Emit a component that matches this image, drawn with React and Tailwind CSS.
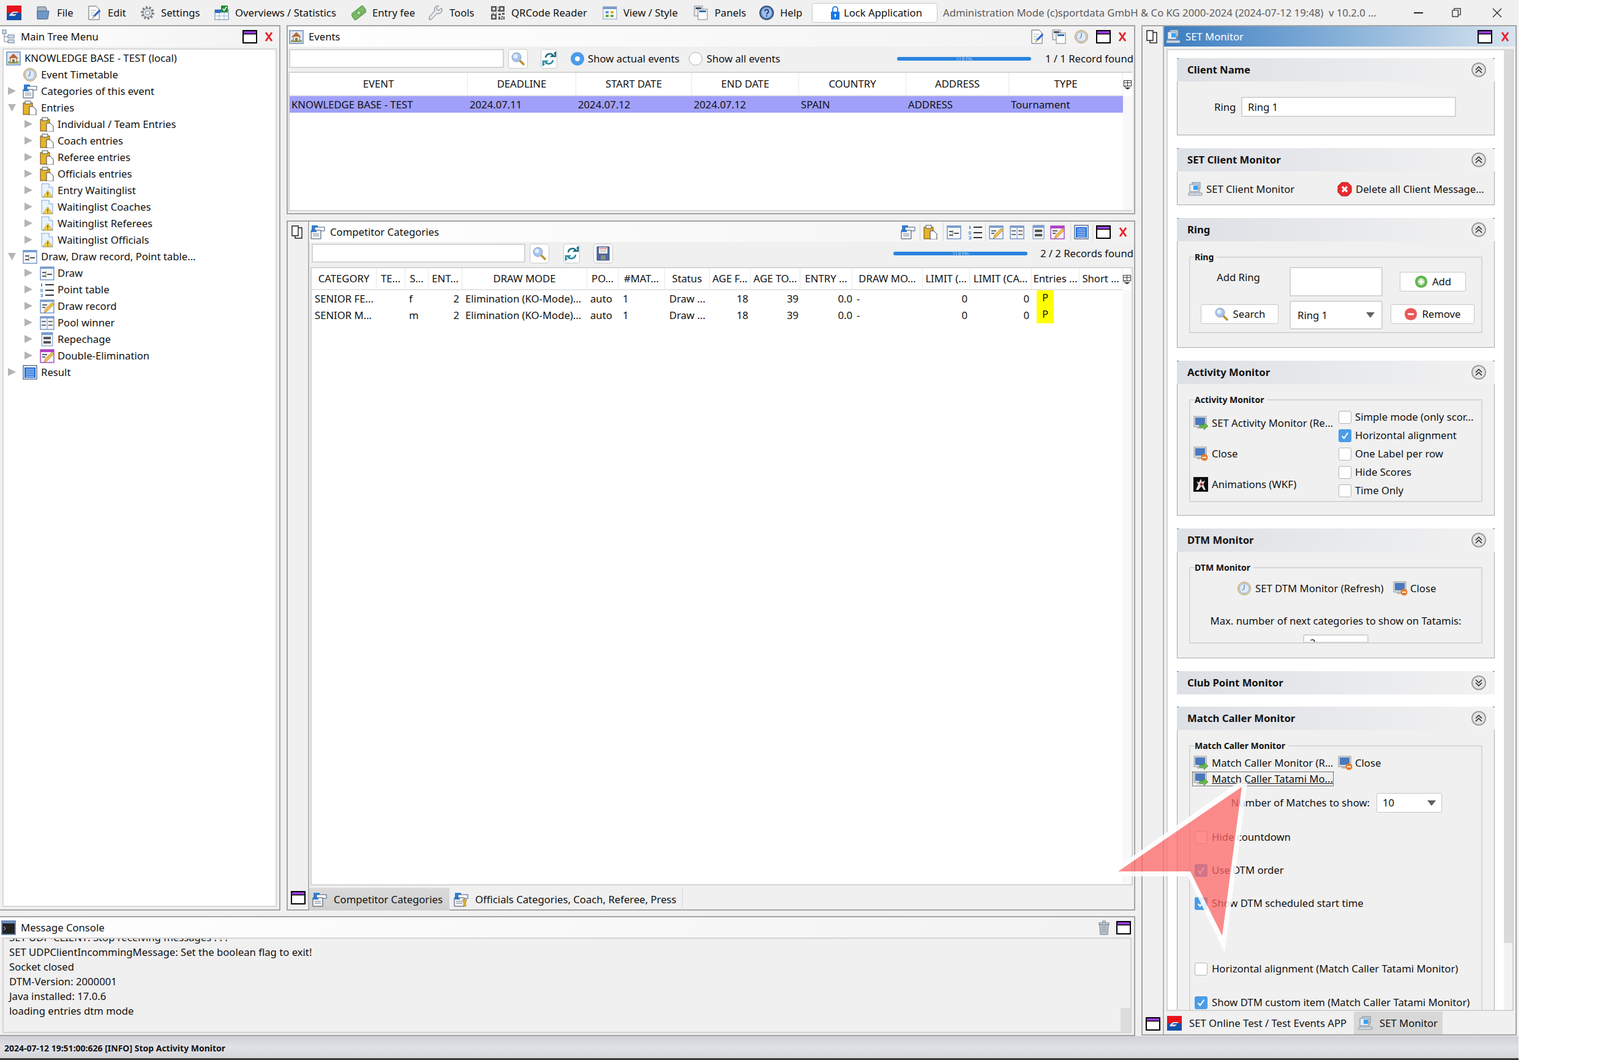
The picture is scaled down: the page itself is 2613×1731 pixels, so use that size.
import React from 'react'

const Svg = ({ children, className = 'w-[24px] h-[24px]', vb = '0 0 24 24' }) => (
  <svg viewBox={vb} className={'shrink-0 ' + className}>{children}</svg>
)

// ---- icons, all drawn by hand ----
const Logo = ({ className }) => (
  <Svg className={className}>
    <rect x="0" y="0" width="24" height="12" fill="#e8141c" />
    <rect x="0" y="12" width="24" height="12" fill="#1450a8" />
    <path d="M5 14 L10 10 L19 10 L17 12 L11 12 L9 14 L16 14 L13 17 L4 17 Z" fill="#d8d8e0" />
  </Svg>
)
const FolderIco = () => (
  <Svg>
    <path d="M2 2h13l2 3v17H2z" fill="#a9b6c6" stroke="#5a6a80" />
    <path d="M2 9h19l-2 13H2z" fill="#6f98c8" stroke="#4a6a90" />
  </Svg>
)
const EditIco = () => (
  <Svg>
    <path d="M3 1h12l5 5v17H3z" fill="#fff" stroke="#5a6475" />
    <path d="M6 8h9M6 12h6M6 16h5" stroke="#9aa" />
    <path d="M9 21l2-5 9-9 2 2-9 9z" fill="#3070d8" stroke="#204a90" strokeWidth=".6" />
    <path d="M9 21l2-5 2 2z" fill="#f0c040" />
  </Svg>
)
const GearIco = () => (
  <Svg>
    <circle cx="12" cy="12" r="9" fill="none" stroke="#7a8088" strokeWidth="4" strokeDasharray="3 2.6" />
    <circle cx="12" cy="12" r="7.4" fill="#dfe3e8" stroke="#6a7078" />
    <circle cx="12" cy="12" r="3.4" fill="#fff" stroke="#6a7078" />
  </Svg>
)
const OverviewIco = () => (
  <Svg>
    <rect x="1" y="7" width="22" height="16" fill="#fff" stroke="#5c7fa8" />
    <path d="M1 12h22M1 17h22M8 7v16M16 7v16" stroke="#8fb0d0" />
    <rect x="1" y="7" width="10" height="5" fill="#2a6fc0" />
    <rect x="11" y="0" width="11" height="11" rx="1" fill="#1d8a30" />
    <path d="M13.5 5l2.5 3 4-6" fill="none" stroke="#fff" strokeWidth="1.6" />
  </Svg>
)
const MoneyIco = () => (
  <Svg>
    <g transform="rotate(-38 12 12)">
      <rect x="0" y="6" width="24" height="12" rx="1" fill="#7dbb6a" stroke="#4e8f42" />
      <circle cx="12" cy="12" r="3.6" fill="#a7d897" stroke="#4e8f42" />
      <path d="M3 9h2M19 15h2" stroke="#3e7d34" />
    </g>
  </Svg>
)
const WrenchIco = () => (
  <Svg>
    <path d="M21 4l-4 4-3-1-1-3 4-4a6 6 0 0 0-7 8L1 19v4h3l10-10a6 6 0 0 0 7-9z" fill="#e4e7eb" stroke="#6c7480" />
  </Svg>
)
const QrIco = () => (
  <Svg>
    <path d="M1 1h9v9H1zM3.500 3.500v4h4v-4zM14 1h9v9h-9zM16.500 3.500v4h4v-4zM1 14h9v9H1zM3.500 16.500v4h4v-4z" fill="#555" fillRule="evenodd" />
    <path d="M12 2h1v3h-1zM12 7h2v3h-2zM2 12h4v1H2zM8 12h3v1H8zM13 13h4v3h-4zM19 12h4v3h-4zM13 18h3v5h-3zM18 17h2v3h-2zM21 18h2v5h-2zM17 21h3v2h-3z" fill="#555" />
  </Svg>
)
const ViewIco = () => (
  <Svg>
    <rect x="1" y="2" width="22" height="20" fill="#fff" stroke="#7e9cc6" />
    <rect x="1" y="2" width="22" height="4" fill="#7e9cc6" />
    <rect x="5" y="9" width="5" height="4" fill="#5a9ad8" />
    <rect x="13" y="9" width="5" height="4" fill="#e0b030" />
    <rect x="5" y="15" width="5" height="4" fill="#58a848" />
    <rect x="13" y="15" width="5" height="4" fill="#70a848" />
  </Svg>
)
const PanelsIco = () => (
  <Svg>
    <rect x="1" y="1" width="13" height="16" fill="#eee" stroke="#7a8088" />
    <rect x="3" y="3" width="9" height="3" fill="#3b4f68" />
    <rect x="7" y="6" width="15" height="17" fill="#fff" stroke="#7a8088" />
    <rect x="9" y="8" width="11" height="3" fill="#2f6db0" />
  </Svg>
)
const HelpIco = () => (
  <Svg>
    <circle cx="12" cy="12" r="11" fill="#5d8ac8" stroke="#2c3f60" strokeWidth="1.6" />
    <circle cx="12" cy="12" r="8" fill="#9fc0e8" />
    <path d="M9 9.500a3 3 0 1 1 4.500 2.600c-1 .6-1.500 1.200-1.500 2.400" fill="none" stroke="#1d3f78" strokeWidth="2" />
    <rect x="11" y="16" width="2" height="2" fill="#1d3f78" />
  </Svg>
)
const LockIco = () => (
  <Svg>
    <path d="M8 11V6a4 4 0 0 1 8 0v5" fill="none" stroke="#2b7fe0" strokeWidth="2" />
    <rect x="5" y="10" width="14" height="13" rx="1" fill="#1878e8" />
    <circle cx="12" cy="15.500" r="1.500" fill="#fff" />
    <rect x="11.300" y="15.500" width="1.400" height="4" fill="#fff" />
  </Svg>
)
const TreeIco = () => (
  <Svg>
    <path d="M5 5v15h6M5 12h6" fill="none" stroke="#6a7a8a" />
    <rect x="2" y="1" width="6" height="6" fill="#cfe0f0" stroke="#6a7a8a" />
    <rect x="11" y="9" width="10" height="5" fill="#cfe0f0" stroke="#6a7a8a" />
    <rect x="11" y="17" width="10" height="5" fill="#cfe0f0" stroke="#6a7a8a" />
  </Svg>
)
const HouseIco = () => (
  <Svg>
    <rect x="1" y="2" width="22" height="21" fill="#dfe7f2" stroke="#6c8cbc" strokeWidth="1.5" />
    <rect x="3" y="17" width="18" height="4" fill="#8ab070" />
    <path d="M12 5L5 12h2v7h10v-7h2z" fill="#f3ead8" stroke="#a05a30" />
    <path d="M12 5L5 12h14z" fill="#b86a38" />
    <rect x="10" y="14" width="4" height="5" fill="#776" />
  </Svg>
)
const ClockIco = () => (
  <Svg>
    <circle cx="12" cy="12" r="10.500" fill="#e9d7b0" stroke="#b09868" />
    <circle cx="12" cy="12" r="8" fill="#dfeafa" stroke="#8aa6cc" />
    <path d="M12 6v6l-3 3" fill="none" stroke="#7088a8" strokeWidth="1.400" />
  </Svg>
)
const CatIco = ({ extra }) => (
  <Svg>
    <rect x="2" y="1" width="10" height="8" fill="#2d7fd8" />
    <rect x="7" y="4" width="16" height="6" fill="#fff" stroke="#3c5a80" />
    <path d="M1 9h16v14H1z" fill="#f2f4f7" stroke="#3c4a5c" />
    <rect x="1" y="9" width="9" height="3" fill="#2d7fd8" />
    <path d="M4 15h10M4 18h10" stroke="#9aa4b0" strokeWidth="1.400" />
    {extra && <path d="M14 12h7l-1.500 6 .5 5h-4l.5-5z" fill="#e8b030" stroke="#7a5a10" strokeWidth=".5" />}
  </Svg>
)
const ClipIco = () => (
  <Svg>
    <rect x="1" y="4" width="15" height="19" fill="#e6b42a" stroke="#6c4a10" />
    <rect x="4" y="1" width="9" height="5" fill="#f4f4f4" stroke="#555" />
    <path d="M11 10h6l5 5v9H11z" fill="#fff" stroke="#444" />
  </Svg>
)
const WarnIco = () => (
  <Svg>
    <path d="M3 1h12l6 6v16H3z" fill="#eaf2fb" stroke="#7da6dc" />
    <path d="M15 1v6h6" fill="#fff" stroke="#7da6dc" />
    <path d="M13 12l8 11H5z" fill="#f4cf4a" stroke="#9a7a18" strokeWidth=".6" />
    <rect x="12.300" y="15" width="1.400" height="4" fill="#5a4608" />
    <rect x="12.300" y="20" width="1.400" height="1.400" fill="#5a4608" />
  </Svg>
)
const DrawIco = () => (
  <Svg>
    <rect x="1" y="2" width="22" height="21" fill="#f6f8fb" stroke="#6f90c4" strokeWidth="1.400" />
    <rect x="1" y="2" width="22" height="3" fill="#7a9ccc" />
    <path d="M4 11h6M4 17h6M12 14h8" stroke="#222" strokeWidth="1.500" />
    <path d="M10 9v10" stroke="#777" />
  </Svg>
)
const NumIco = () => (
  <Svg>
    <path d="M2 2h2v5H2zM1 11h4v1H2v1h3v3H1v-1h3v-1H1zM1 19h4v5H1v-1h3v-1H2v-1h2v-1H1z" fill="#5a8ed0" />
    <path d="M9 4h14M9 13h14M9 21h14" stroke="#333" strokeWidth="1.800" />
  </Svg>
)
const DrawRecIco = () => (
  <Svg>
    <rect x="1" y="2" width="22" height="21" fill="#f6f8fb" stroke="#6f90c4" strokeWidth="1.400" />
    <rect x="1" y="2" width="22" height="3" fill="#7a9ccc" />
    <path d="M4 10h8M4 14h5" stroke="#333" strokeWidth="1.400" />
    <path d="M7 23l2-6L20 6l3 3-11 11z" fill="#f0c050" stroke="#a07020" strokeWidth=".7" />
  </Svg>
)
const PoolIco = () => (
  <Svg>
    <rect x="1" y="2" width="22" height="21" fill="#f4f6fa" stroke="#6f90c4" strokeWidth="1.400" />
    <rect x="1" y="2" width="22" height="3" fill="#7a9ccc" />
    <path d="M12 5v18" stroke="#6f90c4" />
    <path d="M3 10h7M3 16h7M14 10h7M14 16h7" stroke="#444" strokeWidth="1.500" />
  </Svg>
)
const RepIco = () => (
  <Svg>
    <rect x="3" y="1" width="18" height="22" fill="#eef1f6" stroke="#6f90c4" />
    <rect x="3" y="1" width="18" height="4" fill="#7a9ccc" />
    <rect x="6" y="8" width="12" height="4" fill="#555" />
    <rect x="6" y="15" width="12" height="4" fill="#555" />
  </Svg>
)
const DoubleIco = () => (
  <Svg>
    <rect x="1" y="2" width="22" height="21" fill="#f6f2fa" stroke="#a040c0" strokeWidth="1.400" />
    <rect x="1" y="2" width="22" height="4" fill="#b040c8" />
    <path d="M4 10h8M4 14h5" stroke="#333" strokeWidth="1.400" />
    <path d="M7 23l2-6L20 6l3 3-11 11z" fill="#f0c050" stroke="#a07020" strokeWidth=".7" />
  </Svg>
)
const ResultIco = () => (
  <Svg>
    <rect x="1" y="1" width="22" height="22" fill="#fff" stroke="#5c6f8c" strokeWidth="1.500" />
    <rect x="3" y="4" width="18" height="17" fill="#1868d8" />
    <path d="M5 7h14M5 10h14M5 13h14M5 16h14M5 19h14" stroke="#fff" />
  </Svg>
)
const MaxIco = () => (
  <Svg className="w-[24px] h-[22px]" vb="0 0 24 22">
    <rect x="1" y="1" width="22" height="20" fill="#fff" stroke="#000" strokeWidth="2" />
    <rect x="2" y="2" width="20" height="4" fill="#9a3de0" />
    <path d="M1 6.500h22" stroke="#000" strokeWidth="1.500" />
  </Svg>
)
const XIco = () => (
  <Svg className="w-[14px] h-[16px]" vb="0 0 14 16">
    <path d="M2 1l10 14M12 1L2 15" stroke="#e8232c" strokeWidth="3" />
  </Svg>
)
const SearchIco = ({ className = 'w-[24px] h-[24px]' }) => (
  <Svg className={className}>
    <path d="M14 14l8 8" stroke="#b89030" strokeWidth="3.500" />
    <circle cx="9.500" cy="9.500" r="7.500" fill="#a8c4f0" stroke="#8a9ab0" />
    <circle cx="8" cy="8" r="3.500" fill="#e4eefc" />
  </Svg>
)
const RefreshIco = () => (
  <Svg>
    <path d="M6 10a7 7 0 0 1 12-4l-2 2h6V2l-2 2" fill="none" stroke="#1d6c80" strokeWidth="2.600" />
    <path d="M18 14a7 7 0 0 1-12 4l2-2H2v6l2-2" fill="none" stroke="#2a8aa0" strokeWidth="2.600" />
  </Svg>
)
const SaveIco = () => (
  <Svg>
    <rect x="2" y="1" width="20" height="22" fill="#4f6a9c" stroke="#39507c" />
    <rect x="5" y="2" width="14" height="10" fill="#f4eeee" />
    <path d="M6 4h12" stroke="#c04848" />
    <path d="M7 7h10M7 9h10" stroke="#bbb" />
    <rect x="8" y="15" width="8" height="7" fill="#8a8a8a" />
  </Svg>
)
const CopyIco = () => (
  <Svg>
    <path d="M7 5h11v17H7z" fill="#fff" stroke="#222" strokeWidth="1.500" />
    <path d="M2 2h10v16H2z" fill="#fff" stroke="#222" strokeWidth="1.500" />
  </Svg>
)
const GridSmall = () => (
  <Svg className="w-[15px] h-[16px]" vb="0 0 15 16">
    <rect x="1.500" y="1.500" width="12" height="9" fill="#fff" stroke="#333" />
    <path d="M1.500 5h12M7.500 1.500v9" stroke="#333" />
    <path d="M3 13h9l-4.500 3zM1 11.500h4" fill="#333" stroke="#333" strokeWidth=".5" />
  </Svg>
)
const ClientMonIco = () => (
  <Svg>
    <rect x="7" y="1" width="13" height="10" fill="#c8d4e0" stroke="#7a8a9c" />
    <rect x="3" y="4" width="14" height="12" fill="#e4ecf4" stroke="#7a8a9c" />
    <rect x="9" y="6" width="7" height="7" fill="#3aa0f0" />
    <path d="M1 18h22v4H1z" fill="#d4dce4" stroke="#8a98a8" />
    <path d="M4 16v2M12 16v2M19 11v7" stroke="#8a98a8" />
  </Svg>
)
const DelIco = () => (
  <Svg>
    <path d="M7 1h10l6 6v10l-6 6H7l-6-6V7z" fill="#ea2a30" stroke="#b01a20" />
    <path d="M8 8l8 8M16 8l-8 8" stroke="#fff" strokeWidth="3.200" />
  </Svg>
)
const AddIco = () => (
  <Svg className="w-[22px] h-[22px]">
    <circle cx="12" cy="12" r="11" fill="#62b552" />
    <circle cx="12" cy="12" r="6.500" fill="#b6e0a8" />
    <path d="M12 7.500v9M7.500 12h9" stroke="#fff" strokeWidth="2.600" />
  </Svg>
)
const RemoveIco = () => (
  <Svg className="w-[22px] h-[22px]">
    <circle cx="12" cy="12" r="11" fill="#e85858" />
    <path d="M6.500 12h11" stroke="#fff" strokeWidth="3.200" />
  </Svg>
)
const MonGoIco = () => (
  <Svg>
    <rect x="1" y="1" width="20" height="17" fill="#d8dadc" stroke="#9a9a9a" />
    <rect x="3" y="3" width="16" height="12" fill="#4a78c0" />
    <rect x="6" y="18" width="10" height="3" fill="#b8b8b8" />
    <path d="M10 15h7v-4l7 6-7 6v-4h-7z" fill="#6cb84c" stroke="#2f8a2a" strokeWidth=".7" />
  </Svg>
)
const MonCloseIco = () => (
  <Svg>
    <rect x="1" y="1" width="20" height="17" fill="#d8dadc" stroke="#9a9a9a" />
    <rect x="3" y="3" width="16" height="12" fill="#4a78c0" />
    <rect x="6" y="18" width="10" height="3" fill="#b8b8b8" />
    <circle cx="18" cy="18" r="5.500" fill="#e87a28" />
    <path d="M15 18h6" stroke="#fff" strokeWidth="2" />
  </Svg>
)
const AnimIco = () => (
  <Svg>
    <rect x="0" y="0" width="24" height="24" fill="#0c0c0c" />
    <path d="M12 3l2 5 5-2-3 6 4 9h-3l-4-6-5 6H4l4-9-3-5 4 2z" fill="#e8e0e0" />
    <circle cx="13" cy="12" r="2.400" fill="#a03a3a" />
  </Svg>
)
const ConsoleIco = () => (
  <Svg>
    <rect x="0" y="0" width="24" height="24" fill="#6b8ab8" />
    <rect x="2" y="5" width="20" height="17" fill="#222" />
    <path d="M4 10l3 3-3 3" fill="none" stroke="#eee" />
  </Svg>
)
const TrashIco = () => (
  <Svg>
    <path d="M5 7h14l-1 16H6z" fill="#c8d2dc" stroke="#5e6c7a" />
    <path d="M9 9v12M12 9v12M15 9v12" stroke="#6c7a88" />
    <rect x="4" y="4" width="16" height="3" fill="#dfe5ea" stroke="#5e6c7a" />
    <rect x="10" y="1" width="4" height="3" fill="#fff" stroke="#5e6c7a" />
  </Svg>
)
const Chevrons = ({ down }) => (
  <div className="w-[24px] h-[24px] rounded-full border-2 border-[#9c9c9c] bg-[#e4e4e6] flex items-center justify-center shrink-0">
    <svg viewBox="0 0 14 14" className="w-[14px] h-[14px]">
      {down
        ? <path d="M2 2l5 5 5-5M2 7l5 5 5-5" fill="none" stroke="#222" strokeWidth="1.500" />
        : <path d="M2 7l5-5 5 5M2 12l5-5 5 5" fill="none" stroke="#222" strokeWidth="1.500" />}
    </svg>
  </div>
)
const Caret = () => (
  <svg viewBox="0 0 14 9" className="w-[14px] h-[9px] shrink-0"><path d="M0 0h14L7 9z" fill="#606060" /></svg>
)

// ---- data ----
const menu = [
  { w: 'w-[83px]', icon: <FolderIco />, label: 'File' },
  { w: 'w-[87px]', icon: <EditIco />, label: 'Edit' },
  { w: 'w-[121px]', icon: <GearIco />, label: 'Settings' },
  { w: 'w-[224px]', icon: <OverviewIco />, label: 'Overviews / Statistics' },
  { w: 'w-[126px]', icon: <MoneyIco />, label: 'Entry fee' },
  { w: 'w-[101px]', icon: <WrenchIco />, label: 'Tools' },
  { w: 'w-[183px]', icon: <QrIco />, label: 'QRCode Reader' },
  { w: 'w-[149px]', icon: <ViewIco />, label: 'View / Style' },
  { w: 'w-[107px]', icon: <PanelsIco />, label: 'Panels' },
  { w: 'w-[86px]', icon: <HelpIco />, label: 'Help' },
]

const tree = [
  { lvl: 0, icon: <HouseIco />, label: 'KNOWLEDGE BASE - TEST (local)' },
  { lvl: 1, none: true, icon: <ClockIco />, label: 'Event Timetable' },
  { lvl: 1, icon: <CatIco />, label: 'Categories of this event' },
  { lvl: 1, open: true, icon: <ClipIco />, label: 'Entries' },
  { lvl: 2, icon: <ClipIco />, label: 'Individual / Team Entries' },
  { lvl: 2, icon: <ClipIco />, label: 'Coach entries' },
  { lvl: 2, icon: <ClipIco />, label: 'Referee entries' },
  { lvl: 2, icon: <ClipIco />, label: 'Officials entries' },
  { lvl: 2, icon: <WarnIco />, label: 'Entry Waitinglist' },
  { lvl: 2, icon: <WarnIco />, label: 'Waitinglist Coaches' },
  { lvl: 2, icon: <WarnIco />, label: 'Waitinglist Referees' },
  { lvl: 2, icon: <WarnIco />, label: 'Waitinglist Officials' },
  { lvl: 1, open: true, icon: <DrawIco />, label: 'Draw, Draw record, Point table...' },
  { lvl: 2, icon: <DrawIco />, label: 'Draw' },
  { lvl: 2, icon: <NumIco />, label: 'Point table' },
  { lvl: 2, icon: <DrawRecIco />, label: 'Draw record' },
  { lvl: 2, icon: <PoolIco />, label: 'Pool winner' },
  { lvl: 2, icon: <RepIco />, label: 'Repechage' },
  { lvl: 2, icon: <DoubleIco />, label: 'Double-Elimination' },
  { lvl: 1, icon: <ResultIco />, label: 'Result' },
]

const catTools = [
  { icon: <CatIco />, w: 'w-[37px]', sep: true },
  { icon: <ClipIco />, w: 'w-[38px]', sep: true },
  { icon: <DrawIco />, w: 'w-[35px]' },
  { icon: <NumIco />, w: 'w-[34px]', sep: true },
  { icon: <DrawRecIco />, w: 'w-[34px]' },
  { icon: <PoolIco />, w: 'w-[35px]' },
  { icon: <RepIco />, w: 'w-[31px]' },
  { icon: <DoubleIco />, w: 'w-[39px]', sep: true },
  { icon: <ResultIco />, w: 'w-[36px]', sep: true },
  { icon: <MaxIco />, w: 'w-[37px]' },
]

const eventCols = 'grid grid-cols-[291px_177px_189px_175px_175px_168px_186px]'
const catCols = 'grid grid-cols-[106px_47px_38px_55px_204px_51px_76px_73px_67px_81px_85px_115px_77px_101px_78px_70px]'

const catHead = ['CATEGORY', 'TE...', 'S...', 'ENT...', 'DRAW MODE', 'PO...', '#MAT...', 'Status', 'AGE F...', 'AGE TO...', 'ENTRY ...', 'DRAW MO...', 'LIMIT (...', 'LIMIT (CA...', 'Entries ...', 'Short ...']
const catRows = [
  ['SENIOR FE...', 'f'],
  ['SENIOR M...', 'm'],
]

// ---- pieces ----
function Arrow({ open }) {
  return (
    <svg viewBox="0 0 13 13" className="w-[13px] h-[13px] shrink-0">
      {open ? <path d="M0 1h13L6.500 13z" fill="#b4b4b4" /> : <path d="M0 0l13 6.500L0 13z" fill="#b4b4b4" />}
    </svg>
  )
}

function TreeRow({ item }) {
  if (item.lvl === 0) {
    return (
      <div className="flex items-center h-[27px] pl-[4px] gap-[6px]">
        {item.icon}
        <span>{item.label}</span>
      </div>
    )
  }
  if (item.lvl === 1) {
    return (
      <div className="flex items-center h-[27px] pl-[7px]">
        <div className="w-[24px] shrink-0">{!item.none && <Arrow open={item.open} />}</div>
        {item.icon}
        <span className="ml-[6px]">{item.label}</span>
      </div>
    )
  }
  return (
    <div className="flex items-center h-[27px] pl-[34px]">
      <div className="w-[25px] shrink-0"><Arrow /></div>
      {item.icon}
      <span className="ml-[5px]">{item.label}</span>
    </div>
  )
}

function PanelTitle({ icon, title, children, active }) {
  return (
    <div className={active
      ? 'flex items-center h-[33px] shrink-0 pl-[3px] pr-[10px] bg-gradient-to-r from-[#3a7cc0] via-[#85b0d8] to-[#d8e4ef] text-white'
      : 'flex items-center h-[33px] shrink-0 pl-[2px] pr-[10px] bg-gradient-to-r from-white to-[#f2f2f2]'}>
      {icon}
      <span className="ml-[8px]">{title}</span>
      <div className="flex-1" />
      {children}
    </div>
  )
}

function ToolBtn({ children, className }) {
  return (
    <div className={'h-[32px] bg-white border border-[#c9c9c9] rounded-[4px] flex items-center justify-center shrink-0 ' + className}>
      {children}
    </div>
  )
}

function Progress({ className }) {
  return (
    <div className={'relative h-[6px] bg-[#2a84de] rounded-full shrink-0 ' + className}>
      <span className="absolute left-1/2 -top-[3px] -translate-x-1/2 text-[11px] leading-[12px] text-[#9cc4ee]">100%</span>
    </div>
  )
}

function Section({ title, down, h, children }) {
  return (
    <div className={'shrink-0 relative ' + h}>
      <div className="absolute left-0 top-0 w-[3px] h-[1px] bg-[#3a78d8]" />
      <div className="absolute right-0 top-0 w-[3px] h-[1px] bg-[#3a78d8]" />
      <div className="flex items-center h-[38px] pl-[17px] pr-[14px] bg-gradient-to-r from-[#dde0e5] to-[#f2f2f2]">
        <span className="font-bold flex-1">{title}</span>
        <Chevrons down={down} />
      </div>
      {children && (
        <div className="h-[calc(100%-38px)] bg-[#f0f0f0] border border-t-0 border-[#a8a8a8]">
          {children}
        </div>
      )}
    </div>
  )
}

function Group({ title, h, children }) {
  return (
    <fieldset className={'mx-[19px] border-2 border-[#d6d6d6] ' + h}>
      <legend className="ml-[7px] pr-[5px] text-[14px] leading-[16px] font-bold">{title}</legend>
      {children}
    </fieldset>
  )
}

function Check({ checked }) {
  return checked ? (
    <div className="w-[21px] h-[21px] rounded-[3px] bg-[#4a9ce8] flex items-center justify-center shrink-0">
      <svg viewBox="0 0 14 14" className="w-[15px] h-[15px]"><path d="M2.500 7.500l3 3.500 6-8.500" fill="none" stroke="#fff" strokeWidth="2" /></svg>
    </div>
  ) : (
    <div className="w-[21px] h-[21px] rounded-[3px] bg-white border border-[#b4b4b4] shrink-0" />
  )
}

function CheckRow({ checked, label, className }) {
  return (
    <div className={'flex items-center h-[24px] pl-[7px] gap-[7px] ' + className}>
      <Check checked={checked} />
      <span className="whitespace-nowrap">{label}</span>
    </div>
  )
}

function ActionBtn({ icon, label, className }) {
  return (
    <div className={'h-[32px] bg-white border border-[#c6c6c6] rounded-[3px] flex items-center justify-center gap-[7px] ' + className}>
      {icon}
      <span>{label}</span>
    </div>
  )
}

function IconLabel({ icon, label, className }) {
  return (
    <div className={'flex items-center h-[24px] gap-[6px] ' + className}>
      {icon}
      <span className="whitespace-nowrap">{label}</span>
    </div>
  )
}

export default function App() {
  return (
    <div className="relative w-[2613px] h-[1731px] bg-white overflow-hidden font-['Open_Sans',sans-serif] text-[16.7px] leading-[24px] text-[#111]">
      <div className="w-[2480px] h-full flex flex-col bg-[#f0f0f0]">
        {/* menu bar */}
        <div className="flex items-center h-[41px] shrink-0 pl-[11px]">
          <Logo className="w-[24px] h-[24px] mr-[24px]" />
          {menu.map((m) => (
            <div key={m.label} className={'flex items-center gap-[10px] shrink-0 ' + m.w}>
              {m.icon}
              <span className="whitespace-nowrap">{m.label}</span>
            </div>
          ))}
          <div className="flex items-center w-[205px] h-[32px] pl-[25px] gap-[2px] bg-white border border-[#c8c8c8] rounded-[4px] shrink-0">
            <LockIco />
            <span>Lock Application</span>
          </div>
          <span className="ml-[9px] text-[#5c5c5c] whitespace-nowrap w-[758px] shrink-0">Administration Mode (c)sportdata GmbH &amp; Co KG 2000-2024 (2024-07-12 19:48)&nbsp; v 10.2.0 ...</span>
          <div className="w-[37px] flex justify-center"><div className="w-[15px] h-[2px] bg-[#222]" /></div>
          <div className="w-[29px] flex justify-center ml-[29px]">
            <svg viewBox="0 0 16 16" className="w-[15px] h-[15px]"><path d="M1 4h10v11H1zM4 4V1h11v11h-4" fill="none" stroke="#222" strokeWidth="1.300" /></svg>
          </div>
          <div className="w-[29px] flex justify-center ml-[37px]">
            <svg viewBox="0 0 16 16" className="w-[16px] h-[16px]"><path d="M1 1l14 14M15 1L1 15" stroke="#222" strokeWidth="1.300" /></svg>
          </div>
        </div>

        <div className="flex h-[1651px] shrink-0">
          <div className="w-[1854px] flex flex-col shrink-0">
            <div className="flex h-[1446px] shrink-0">
              {/* tree panel */}
              <div className="w-[458px] shrink-0 flex flex-col border-t-2 border-r-2 border-b-2 border-[#a4a4a4]">
                <PanelTitle icon={<TreeIco />} title="Main Tree Menu">
                  <MaxIco />
                  <div className="w-[12px]" />
                  <XIco />
                </PanelTitle>
                <div className="flex-1 mx-[4px] mt-[3px] mb-[4px] bg-white border-2 border-[#d8d8d8]">
                  {tree.map((t) => <TreeRow key={t.label} item={t} />)}
                </div>
              </div>

              <div className="w-[1386px] ml-[10px] shrink-0 flex flex-col">
                {/* events */}
                <div className="h-[309px] shrink-0 flex flex-col border-2 border-[#a4a4a4]">
                  <PanelTitle icon={<HouseIco />} title="Events">
                    <div className="flex items-center gap-[12px] mr-[2px]">
                      <EditIco />
                      <PanelsIco />
                      <ClockIco />
                      <MaxIco />
                      <XIco />
                    </div>
                  </PanelTitle>
                  <div className="flex items-center h-[41px] shrink-0 pl-[2px] pr-[1px] pb-[2px]">
                    <div className="w-[351px] h-[31px] bg-white border-2 border-[#d4d4d4] shrink-0" />
                    <ToolBtn className="w-[32px] ml-[7px]"><SearchIco /></ToolBtn>
                    <ToolBtn className="w-[27px] ml-[21px]"><RefreshIco /></ToolBtn>
                    <div className="w-[22px] h-[22px] rounded-full bg-[#4a9ce8] ml-[22px] flex items-center justify-center shrink-0">
                      <div className="w-[8px] h-[8px] rounded-full bg-white" />
                    </div>
                    <span className="ml-[6px] w-[165px] shrink-0 whitespace-nowrap">Show actual events</span>
                    <div className="w-[22px] h-[22px] rounded-full bg-white border border-[#b0b0b0] shrink-0" />
                    <span className="ml-[7px] w-[311px] shrink-0">Show all events</span>
                    <Progress className="w-[219px]" />
                    <span className="flex-1 text-right whitespace-nowrap">1 / 1 Record found</span>
                  </div>
                  <div className="flex-1 mx-[1px] mb-[3px] mr-[3px] border-2 border-[#d4d4d4] bg-white flex">
                    <div className="w-[1361px] shrink-0">
                      <div className={eventCols + ' h-[38px] text-center border-b-2 border-[#e4e4e4]'}>
                        {['EVENT', 'DEADLINE', 'START DATE', 'END DATE', 'COUNTRY', 'ADDRESS', 'TYPE'].map((c) => (
                          <div key={c} className="flex items-center justify-center border-r border-[#e8e8e8]">{c}</div>
                        ))}
                      </div>
                      <div className={eventCols + ' h-[27px] items-center bg-[#a0a0fa]'}>
                        {['KNOWLEDGE BASE - TEST', '2024.07.11', '2024.07.12', '2024.07.12', 'SPAIN', 'ADDRESS', 'Tournament'].map((c, i) => (
                          <div key={i} className="pl-[3px] whitespace-nowrap">{c}</div>
                        ))}
                      </div>
                    </div>
                    <div className="flex-1 flex flex-col bg-[#f8f8f8]">
                      <div className="h-[38px] flex items-center justify-center bg-white"><GridSmall /></div>
                    </div>
                  </div>
                </div>

                {/* competitor categories */}
                <div className="mt-[10px] flex-1 flex border-2 border-[#a4a4a4] min-h-0">
                  <div className="w-[35px] shrink-0 flex flex-col items-center border-r-2 border-[#b4b4b4] pt-[5px] pb-[8px]">
                    <CopyIco />
                    <div className="flex-1" />
                    <MaxIco />
                  </div>
                  <div className="flex-1 flex flex-col min-w-0">
                    <PanelTitle icon={<CatIco />} title="Competitor Categories">
                      <div className="flex items-center mr-[1px]">
                        {catTools.map((t, i) => (
                          <div key={i} className={'flex items-center justify-between pr-[5px] shrink-0 ' + t.w}>
                            {t.icon}
                            {t.sep && <div className="w-px h-[30px] bg-[#d4d4d4]" />}
                          </div>
                        ))}
                        <XIco />
                      </div>
                    </PanelTitle>
                    <div className="flex items-center h-[41px] shrink-0 pl-[4px] pr-[1px] pb-[4px]">
                      <div className="w-[349px] h-[31px] bg-white border-2 border-[#d4d4d4] shrink-0" />
                      <ToolBtn className="w-[32px] ml-[7px]"><SearchIco /></ToolBtn>
                      <ToolBtn className="w-[27px] ml-[23px]"><RefreshIco /></ToolBtn>
                      <ToolBtn className="w-[32px] ml-[22px]"><SaveIco /></ToolBtn>
                      <div className="w-[458px] shrink-0" />
                      <Progress className="w-[219px]" />
                      <span className="flex-1 text-right whitespace-nowrap">2 / 2 Records found</span>
                    </div>
                    <div className="flex-1 mx-[2px] border-2 border-[#d4d4d4] bg-white flex min-h-0">
                      <div className="w-[1324px] shrink-0">
                        <div className={catCols + ' h-[36px] border-b-2 border-[#e4e4e4]'}>
                          {catHead.map((c) => (
                            <div key={c} className="flex items-center justify-center border-r border-[#e8e8e8] whitespace-nowrap">{c}</div>
                          ))}
                        </div>
                        {catRows.map((r) => (
                          <div key={r[0]} className={catCols + ' h-[27px] items-center whitespace-nowrap'}>
                            <div className="pl-[5px]">{r[0]}</div>
                            <div />
                            <div className="pl-[6px]">{r[1]}</div>
                            <div className="text-right pr-[5px]">2</div>
                            <div className="pl-[5px]">Elimination (KO-Mode)...</div>
                            <div className="pl-[5px]">auto</div>
                            <div className="pl-[7px]">1</div>
                            <div className="pl-[7px]">Draw ...</div>
                            <div className="text-right pr-[4px]">18</div>
                            <div className="text-right pr-[3px]">39</div>
                            <div className="text-right">0.0</div>
                            <div className="pl-[7px]">-</div>
                            <div className="text-right pr-[4px]">0</div>
                            <div className="text-right pr-[4px]">0</div>
                            <div className="pl-[8px]"><div className="w-[28px] h-[27px] bg-[#ffff00] text-center">P</div></div>
                            <div />
                          </div>
                        ))}
                      </div>
                      <div className="flex-1 flex flex-col bg-[#f8f8f8]">
                        <div className="h-[36px] flex items-center justify-center bg-white"><GridSmall /></div>
                      </div>
                    </div>
                    <div className="flex h-[41px] shrink-0 pt-[4px] -mb-[2px]">
                      <div className="flex items-center w-[228px] pl-[5px] gap-[11px] bg-gradient-to-b from-[#dadada] to-[#cfcfcf]">
                        <CatIco />
                        <span className="whitespace-nowrap">Competitor Categories</span>
                      </div>
                      <div className="flex items-center w-[382px] pl-[7px] gap-[11px] border-x border-[#d8d8d8]">
                        <CatIco extra />
                        <span className="whitespace-nowrap">Officials Categories, Coach, Referee, Press</span>
                      </div>
                    </div>
                  </div>
                </div>
              </div>
            </div>

            {/* console */}
            <div className="mt-[9px] flex-1 flex flex-col border-y-2 border-[#a4a4a4] border-r-2 min-h-0">
              <PanelTitle icon={<ConsoleIco />} title="Message Console">
                <div className="flex items-center -mr-[5px]">
                  <TrashIco />
                  <div className="w-[8px]" />
                  <MaxIco />
                </div>
              </PanelTitle>
              <div className="flex-1 mx-[4px] mb-[3px] border-2 border-[#d4d4d4] flex min-h-0">
                <div className="flex-1 overflow-hidden pl-[9px]">
                  <div className="-mt-[14px]">
                    <div>SET UDP-CLIENT: Stop receiving messages ! ! !</div>
                    <div>SET UDPClientIncommingMessage: Set the boolean flag to exit!</div>
                    <div>Socket closed</div>
                    <div>DTM-Version: 2000001</div>
                    <div>Java installed: 17.0.6</div>
                    <div>loading entries dtm mode</div>
                  </div>
                </div>
                <div className="w-[16px] flex flex-col">
                  <div className="flex-1" />
                  <div className="h-[39px] bg-[#dcdcdc]" />
                </div>
              </div>
            </div>
          </div>

          {/* right panel */}
          <div className="w-[613px] ml-[10px] shrink-0 mb-[1px] flex border-2 border-[#a4a4a4]">
            <div className="w-[35px] shrink-0 flex flex-col items-center border-r-2 border-[#b4b4b4] pt-[5px] pb-[6px]">
              <CopyIco />
              <div className="flex-1" />
              <MaxIco />
            </div>
            <div className="flex-1 flex flex-col min-w-0">
              <PanelTitle active icon={<ClientMonIco />} title="SET Monitor">
                <MaxIco />
                <div className="w-[14px]" />
                <XIco />
              </PanelTitle>
              <div className="h-[1571px] shrink-0 ml-[4px] mr-[3px] mt-[4px] border-2 border-[#d4d4d4] flex bg-white">
                <div className="flex-1 min-w-0 overflow-hidden pt-[13px] pl-[15px] pr-[15px] flex flex-col gap-[21px]">
                  <Section title="Client Name" h="h-[126px]">
                    <div className="flex items-center pt-[25px] pl-[60px]">
                      <span className="w-[35px]">Ring</span>
                      <div className="ml-[9px] w-[351px] h-[33px] bg-white border-2 border-[#d4d4d4] pl-[9px] leading-[29px]">Ring 1</div>
                    </div>
                  </Section>
                  <Section title="SET Client Monitor" h="h-[93px]">
                    <div className="flex pt-[17px] pl-[17px]">
                      <IconLabel className="w-[244px]" icon={<ClientMonIco />} label="SET Client Monitor" />
                      <IconLabel icon={<DelIco />} label="Delete all Client Message..." />
                    </div>
                  </Section>
                  <Section title="Ring" h="h-[212px]">
                    <div className="pt-[18px]">
                      <Group title="Ring" h="h-[132px]">
                        <div className="grid grid-cols-[162px_152px_1fr] grid-rows-[48px_47px] gap-y-[7px] mt-[8px]">
                          <div className="pl-[43px] pt-[5px]">Add Ring</div>
                          <div className="bg-white border-2 border-[#d4d4d4]" />
                          <div className="pl-[28px] pt-[8px]"><ActionBtn className="w-[108px]" icon={<AddIco />} label="Add" /></div>
                          <div className="pl-[17px] pt-[6px]"><ActionBtn className="w-[127px]" icon={<SearchIco />} label="Search" /></div>
                          <div className="flex items-center justify-between px-[11px] bg-white border-2 border-[#d4d4d4] rounded-[3px]"><span>Ring 1</span><Caret /></div>
                          <div className="pl-[13px] pt-[6px]"><ActionBtn className="w-[137px]" icon={<RemoveIco />} label="Remove" /></div>
                        </div>
                      </Group>
                    </div>
                  </Section>
                  <Section title="Activity Monitor" h="h-[253px]">
                    <div className="pt-[18px]">
                      <Group title="Activity Monitor" h="h-[175px]">
                        <div className="grid grid-cols-[242px_1fr]">
                          <div className="pl-[5px] pt-[18px] flex flex-col gap-[26px]">
                            <IconLabel icon={<MonGoIco />} label="SET Activity Monitor (Re..." />
                            <IconLabel icon={<MonCloseIco />} label="Close" />
                            <IconLabel icon={<AnimIco />} label="Animations (WKF)" />
                          </div>
                          <div className="pt-[5px]">
                            {[['Simple mode (only scor...'], ['Horizontal alignment', true], ['One Label per row'], ['Hide Scores'], ['Time Only']].map(([l, c]) => (
                              <div key={l} className="flex items-center h-[30px] gap-[6px]">
                                <Check checked={c} />
                                <span className="whitespace-nowrap">{l}</span>
                              </div>
                            ))}
                          </div>
                        </div>
                      </Group>
                    </div>
                  </Section>
                  <Section title="DTM Monitor" h="h-[212px]">
                    <div className="pt-[18px]">
                      <Group title="DTM Monitor" h="h-[132px]">
                        <div className="flex items-center pt-[14px] pl-[76px]">
                          <IconLabel className="w-[255px]" icon={<ClockIco />} label="SET DTM Monitor (Refresh)" />
                          <IconLabel className="!gap-[4px]" icon={<MonCloseIco />} label="Close" />
                        </div>
                        <div className="mt-[29px] text-center whitespace-nowrap">Max. number of next categories to show on Tatamis:</div>
                        <div className="mt-[10px] ml-[184px] w-[107px] h-[14px] overflow-hidden bg-white border-2 border-[#d4d4d4] rounded-t-[3px] pl-[9px]">2</div>
                      </Group>
                    </div>
                  </Section>
                  <Section down title="Club Point Monitor" h="h-[37px]" />
                  <Section title="Match Caller Monitor" h="h-[600px]">
                    <div className="pt-[18px]">
                      <Group title="Match Caller Monitor" h="h-[560px]">
                        <div className="flex pt-[8px] pl-[5px]">
                          <IconLabel className="w-[236px]" icon={<MonGoIco />} label="Match Caller Monitor (R..." />
                          <IconLabel className="!gap-[4px]" icon={<MonCloseIco />} label="Close" />
                        </div>
                        <div className="mt-[2px] ml-[3px] w-[231px] h-[24px] border border-dotted border-black flex items-center gap-[6px] pl-[1px]">
                          <MonGoIco />
                          <span className="underline whitespace-nowrap">Match Caller Tatami Mo...</span>
                        </div>
                        <div className="mt-[11px] flex items-center justify-end w-[411px] gap-[11px]">
                          <span className="whitespace-nowrap">Number of Matches to show:</span>
                          <div className="w-[107px] h-[32px] shrink-0 flex items-center justify-between pl-[9px] pr-[9px] bg-white border border-[#c6c6c6] rounded-[3px]"><span>10</span><Caret /></div>
                        </div>
                        <CheckRow className="mt-[28px]" label="Hide countdown" />
                        <CheckRow className="mt-[30px]" checked label="Use DTM order" />
                        <CheckRow className="mt-[30px]" checked label="Show DTM scheduled start time" />
                        <CheckRow className="mt-[83px]" label="Horizontal alignment (Match Caller Tatami Monitor)" />
                        <CheckRow className="mt-[31px]" checked label="Show DTM custom item (Match Caller Tatami Monitor)" />
                      </Group>
                    </div>
                  </Section>
                </div>
                <div className="w-[14px] shrink-0 flex flex-col">
                  <div className="h-[1458px] bg-[#dadada]" />
                  <div className="flex-1 bg-[#f2f2f2]" />
                </div>
              </div>
              <div className="flex h-[38px] shrink-0 items-end -mb-[2px]">
                <div className="flex items-center h-[37px] w-[311px] pl-[5px] gap-[12px] border-r border-[#d8d8d8]">
                  <Logo className="w-[24px] h-[24px]" />
                  <span className="whitespace-nowrap">SET Online Test / Test Events APP</span>
                </div>
                <div className="flex items-center h-[37px] w-[144px] pl-[6px] gap-[11px] bg-[#d8d8d8]">
                  <ClientMonIco />
                  <span className="whitespace-nowrap">SET Monitor</span>
                </div>
              </div>
            </div>
          </div>
        </div>

        {/* status bar */}
        <div className="relative flex-1 flex items-center pl-[7px] pt-[4px] border-b-[3px] border-[#3a3a3a] bg-gradient-to-b from-[#cfd1d6] via-[#e0e1e6] to-[#d4d5d9] text-[14px] font-bold">
          2024-07-12 19:51:00:626 [INFO] Stop Activity Monitor
        </div>
      </div>

      {/* red arrow drawn over the screenshot */}
      <svg viewBox="0 0 2613 1731" className="absolute inset-0 w-[2613px] h-[1731px] pointer-events-none">
        <path d="M2037 1279L2000 1556L1940 1431L1828 1431L1826 1423L1833 1410L2020 1279ZM2028 1285L1826 1423L1944 1423L1996 1528Z" fill="#ffffff" fillOpacity="0.85" fillRule="evenodd" />
        <polygon points="2028,1285 1826,1423 1944,1423 1996,1528" fill="#ff6666" fillOpacity="0.74" />
      </svg>
    </div>
  )
}
